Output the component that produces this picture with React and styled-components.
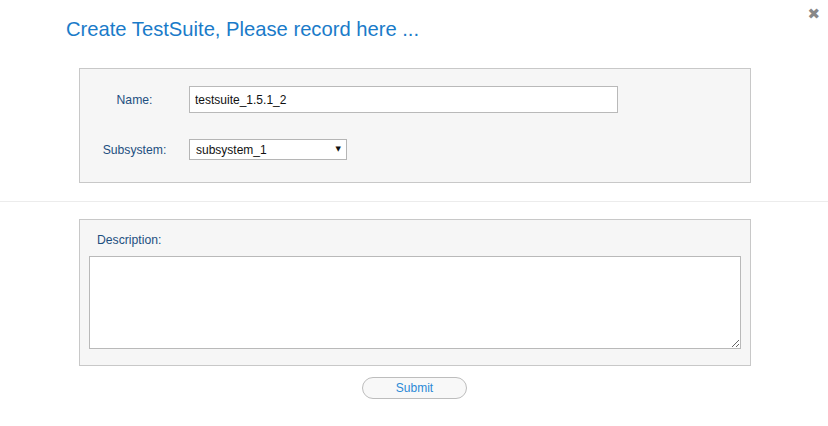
import React from "react";
import styled, { createGlobalStyle } from "styled-components";

const Global = createGlobalStyle`
  html, body { margin: 0; padding: 0; background: #fff; }
  body { font-family: "Liberation Sans", Arial, sans-serif; }
`;

const Page = styled.div`
  position: relative;
  width: 828px;
  height: 426px;
  background: #fff;
`;

const Title = styled.h1`
  margin: 0;
  padding: 17px 0 0 66px;
  height: 52px;
  box-sizing: border-box;
  font-size: 20.2px;
  font-weight: normal;
  color: #1a7bc9;
  line-height: 24px;
`;

const Close = styled.span`
  position: absolute;
  top: 6px;
  right: 8px;
  font-size: 15px;
  font-weight: bold;
  color: #888;
  line-height: 16px;
  font-family: "DejaVu Sans", sans-serif;
`;

const Panel = styled.div`
  margin: ${(p) => p.$top}px 0 0 79px;
  width: 672px;
  box-sizing: border-box;
  border: 1px solid #c8c8c8;
  background: #f6f6f6;
  padding: ${(p) => p.$pad};
`;

const FormGrid = styled.div`
  display: grid;
  grid-template-columns: 109px auto;
  row-gap: 26px;
  align-items: center;
`;

const Label = styled.label`
  font-size: 12.2px;
  color: #1d4f80;
  text-align: ${(p) => (p.$center ? "center" : "left")};
`;

const TextInput = styled.input`
  width: 429px;
  height: 27px;
  box-sizing: border-box;
  border: 1px solid #b9b9b9;
  background: #fff;
  padding: 0 5px;
  font-family: "Liberation Sans", Arial, sans-serif;
  font-size: 12px;
  color: #111;
  outline: none;
`;

const SelectWrap = styled.div`
  position: relative;
  width: 158px;
  height: 21px;
`;

const Select = styled.select`
  appearance: none;
  -webkit-appearance: none;
  width: 158px;
  height: 21px;
  box-sizing: border-box;
  border: 1px solid #b5b5b5;
  border-radius: 0;
  background: #fff;
  padding: 0 0 0 6px;
  font-family: "Liberation Sans", Arial, sans-serif;
  font-size: 12px;
  color: #111;
  outline: none;
`;

const Arrow = styled.span`
  position: absolute;
  right: 6px;
  top: 6px;
  font-size: 7px;
  line-height: 8px;
  color: #111;
  pointer-events: none;
  font-family: "DejaVu Sans", sans-serif;
`;

const Divider = styled.hr`
  margin: 18px 0 0;
  border: 0;
  border-top: 1px solid #ececec;
  height: 0;
`;

const DescLabel = styled(Label)`
  display: block;
  padding-left: 8px;
  line-height: 14px;
  margin-bottom: 9px;
`;

const TextArea = styled.textarea`
  display: block;
  width: 652px;
  height: 93px;
  box-sizing: border-box;
  margin: 0;
  border: 1px solid #b9b9b9;
  background: #fff;
  outline: none;
  font-family: "Liberation Sans", Arial, sans-serif;
  font-size: 12px;
`;

const Footer = styled.div`
  display: flex;
  justify-content: center;
  padding-top: 11px;
`;

const SubmitButton = styled.button`
  width: 105px;
  height: 22px;
  margin-left: 1px;
  border: 1px solid #bdbdbd;
  border-radius: 11px;
  background: #f8f8f8;
  color: #2c8ad6;
  font-family: "Liberation Sans", Arial, sans-serif;
  font-size: 12px;
  padding: 0;
  cursor: pointer;
`;

export default function App() {
  return (
    <Page>
      <Global />
      <Title>Create TestSuite, Please record here ...</Title>
      <Close>✖</Close>
      <Panel $top={16} $pad="17px 0 22px 0">
        <FormGrid>
          <Label $center>Name:</Label>
          <TextInput defaultValue="testsuite_1.5.1_2" />
          <Label $center>Subsystem:</Label>
          <SelectWrap>
            <Select defaultValue="subsystem_1">
              <option value="subsystem_1">subsystem_1</option>
            </Select>
            <Arrow>▼</Arrow>
          </SelectWrap>
        </FormGrid>
      </Panel>
      <Divider />
      <Panel $top={17} $pad="13px 9px 16px 9px">
        <DescLabel>Description:</DescLabel>
        <TextArea />
      </Panel>
      <Footer>
        <SubmitButton>Submit</SubmitButton>
      </Footer>
    </Page>
  );
}
